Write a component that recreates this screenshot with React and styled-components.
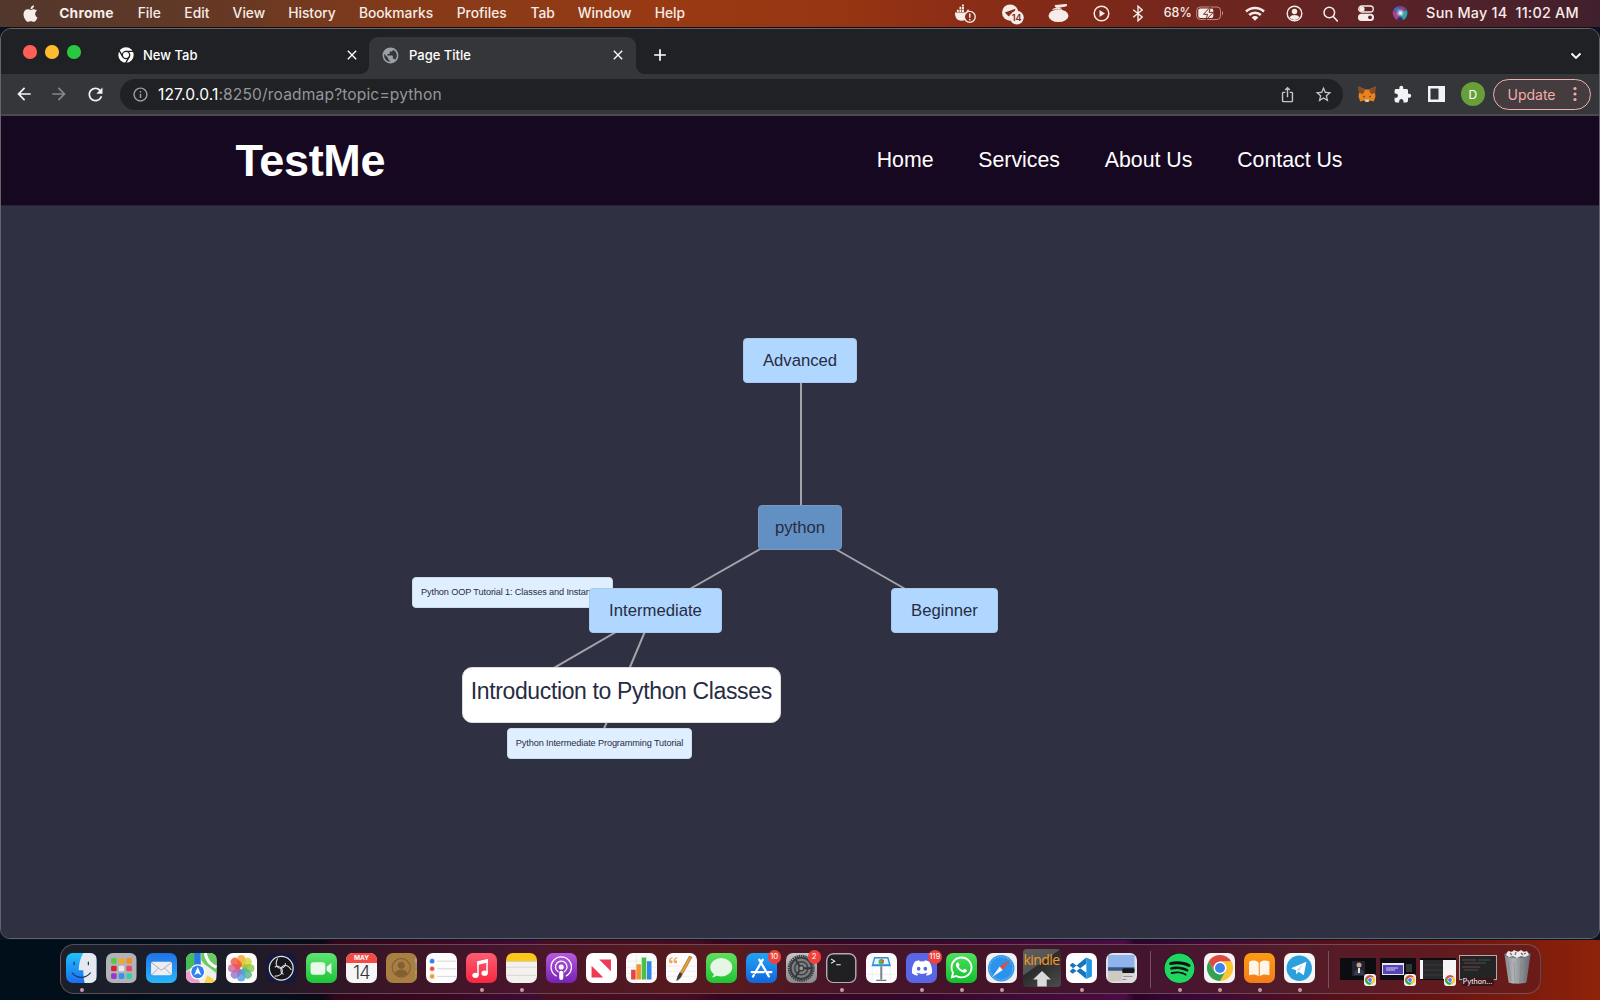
import React from "react";
import styled, { createGlobalStyle, css } from "styled-components";
import { FaApple, FaDiscord, FaWhatsapp, FaSpotify } from "react-icons/fa";
import { MdExtension, MdRefresh, MdInfoOutline, MdPublic, MdStarBorder, MdArrowBack, MdArrowForward, MdClose, MdAdd, MdOutlineIosShare } from "react-icons/md";

const ui = `Inter, "Liberation Sans", sans-serif`;
const helv = `"Liberation Sans", Arial, sans-serif`;

const Global = createGlobalStyle`
  * { box-sizing: border-box; }
  html, body { margin: 0; padding: 0; overflow: hidden; }
  body { font-family: ${ui}; }
  svg { display: block; flex: none; }
`;

const Desktop = styled.div`
  width: 1600px;
  height: 1000px;
  display: flex;
  flex-direction: column;
  overflow: hidden;
  background:
    linear-gradient(90deg, #010f1b 0, #030f1b 270px, #0a0917 322px, #33061c 336px, #3a0720 440px, #3f0a36 535px, #470d20 545px, #450b20 695px, #34061e 720px, #350629 900px, #4c0b46 1125px, #2a0428 1135px, #3c083a 1200px, #55101a 1330px, #6a1510 1450px, #8f2309 1600px) 0 940px / 1600px 60px no-repeat,
    #0a1322;
`;

const MenuBar = styled.header`
  height: 28px;
  flex: none;
  display: flex;
  align-items: flex-start;
  justify-content: space-between;
  padding: 0 21px 0 20.5px;
  color: #f6ece8;
  border-bottom: 1px solid #150e10;
  background: linear-gradient(90deg, #52372c 0, #5c3829 130px, #6b3922 260px, #843a19 400px, #983a14 660px, #963512 850px, #8c2e16 950px, #7d2819 1100px, #6b2521 1260px, #53222a 1440px, #40202d 1600px);
`;

const MenuSide = styled.div`
  height: 26px;
  display: flex;
  align-items: center;
`;

const MenuItem = styled.span`
  width: ${(p) => p.$w}px;
  margin-left: ${(p) => p.$ml ?? 23.3}px;
  padding-top: ${(p) => p.$pt ?? 0}px;
  display: flex;
  justify-content: center;
  white-space: nowrap;
  font-size: ${(p) => p.$size ?? 13.8}px;
  line-height: 20px;
  font-weight: ${(p) => (p.$bold ? 700 : 500)};
  letter-spacing: ${(p) => p.$ls ?? 0}px;
`;

const Window = styled.main`
  height: 911px;
  flex: none;
  display: flex;
  flex-direction: column;
  overflow: hidden;
  border: 1px solid #63656a;
  border-radius: 11px 11px 10px 10px;
  background: #202124;
`;

const TabStrip = styled.div`
  height: 45px;
  flex: none;
  display: flex;
  align-items: flex-end;
  background: #202124;
`;

const Lights = styled.div`
  display: flex;
  gap: 8.6px;
  padding: 0 0 15.5px 22px;
  width: 101px;
`;

const Light = styled.i`
  width: 13.6px;
  height: 13.6px;
  border-radius: 50%;
  background: ${(p) => p.$c};
`;

const Tab = styled.div`
  position: relative;
  width: ${(p) => p.$w}px;
  height: 37px;
  display: flex;
  align-items: center;
  padding: 0 ${(p) => p.$pr}px 1px ${(p) => p.$pl}px;
  color: #fff;
  font-size: 13px;
  font-weight: 500;
  border-radius: 9px 9px 0 0;
  ${(p) =>
    p.$active &&
    css`
      background: #35363a;
      &::before,
      &::after {
        content: "";
        position: absolute;
        bottom: 0;
        width: 8px;
        height: 8px;
      }
      &::before {
        left: -8px;
        background: radial-gradient(circle at 0 0, transparent 7.5px, #35363a 8px);
      }
      &::after {
        right: -8px;
        background: radial-gradient(circle at 100% 0, transparent 7.5px, #35363a 8px);
      }
    `}
`;

const TabTitle = styled.span`
  flex: 1;
  margin-left: 9px;
  white-space: nowrap;
`;

const NewTab = styled.span`
  margin: 0 auto 9px 14px;
  color: #fff;
`;

const TabMenu = styled.span`
  margin: 0 17.5px 12px 0;
`;

const Toolbar = styled.div`
  height: 40px;
  flex: none;
  display: flex;
  align-items: center;
  padding: 0 8px 0 13px;
  background: #35363a;
  color: #f1f3f4;
`;

const ToolButton = styled.span`
  width: ${(p) => p.$w}px;
  flex: none;
  display: flex;
  color: ${(p) => p.$c ?? "#f1f3f4"};
`;

const UrlBar = styled.div`
  width: 1223px;
  height: 31px;
  flex: none;
  display: flex;
  align-items: center;
  padding: 0 10px 0 12px;
  border-radius: 16px;
  background: #202124;
  color: #c3c5c8;
`;

const Url = styled.span`
  flex: 1;
  margin-left: 9px;
  color: #94969a;
  font-size: 15.6px;
  letter-spacing: 0.13px;
  white-space: nowrap;
`;

const Host = styled.span`
  color: #fff;
`;

const Extensions = styled.div`
  display: flex;
  align-items: center;
  margin-left: 15px;
`;

const Avatar = styled.span`
  width: 24.5px;
  height: 24.5px;
  flex: none;
  display: grid;
  place-items: center;
  border-radius: 50%;
  background: #689f38;
  color: #fff;
  font-size: 12px;
`;

const Update = styled.span`
  width: 98px;
  height: 31px;
  margin-left: 7.5px;
  display: flex;
  align-items: center;
  justify-content: space-between;
  padding: 0 13px 0 14px;
  border: 1.5px solid #f0b0ac;
  border-radius: 16px;
  background: #453c40;
  color: #f3aca7;
  font-size: 14px;
`;

const Page = styled.section`
  flex: 1;
  display: flex;
  flex-direction: column;
  border-top: 2px solid #4b4a50;
  background: #2f3142;
  font-family: ${helv};
`;

const SiteHeader = styled.header`
  height: 90px;
  flex: none;
  display: flex;
  align-items: center;
  justify-content: space-between;
  padding: 0 256.5px 0 234.5px;
  border-bottom: 1px solid #29203a;
  background: #170822;
  color: #fff;
`;

const Brand = styled.h1`
  margin: 0;
  font-size: 45px;
  line-height: 52px;
  font-weight: 700;
  letter-spacing: -0.35px;
`;

const Nav = styled.nav`
  display: flex;
  gap: 44.8px;
  font-size: 21.3px;
`;

const NavLink = styled.a`
  color: #fff;
  white-space: nowrap;
`;

const Canvas = styled.div`
  position: relative;
  flex: 1;
`;

const Edges = styled.svg`
  position: absolute;
  left: 0;
  top: 0;
`;

const kinds = {
  root: css`background: #6290c3; border: 1px solid #7898c0; font-size: 16.7px;`,
  level: css`background: #b0d7ff; border: 1px solid #a9c9ee; font-size: 16.7px;`,
  leaf: css`background: #e0efff; border: 1px solid #cddced; font-size: 9.2px; letter-spacing: -0.13px; padding-bottom: 1px;`,
  focus: css`background: #fff; border: 1px solid #ddd; border-radius: 10px; font-size: 23px; letter-spacing: -0.36px; padding-bottom: 7px;`,
};

const Node = styled.div`
  position: absolute;
  left: ${(p) => p.$x}px;
  top: ${(p) => p.$y}px;
  width: ${(p) => p.$w}px;
  height: ${(p) => p.$h}px;
  display: flex;
  align-items: center;
  justify-content: ${(p) => (p.$clip ? "flex-start" : "center")};
  padding-left: ${(p) => (p.$clip ? 8.5 : 0)}px;
  overflow: hidden;
  white-space: nowrap;
  border-radius: 4px;
  color: #272c42;
  ${(p) => kinds[p.$kind]}
`;

const DockArea = styled.footer`
  height: 61px;
  flex: none;
  display: flex;
  padding: 5px 59px 0 59.5px;
`;

const Dock = styled.div`
  width: 1481px;
  height: 50px;
  display: flex;
  padding: 0 1px;
  border: 1px solid rgba(150, 120, 135, 0.5);
  border-radius: 14px;
  background: linear-gradient(90deg, #19202a 0, #1c1c28 170px, #2c1727 250px, #3c1526 340px, #47152c 450px, #54191f 600px, #561a20 680px, #47152a 790px, #431429 900px, #42142e 1060px, #4a162f 1130px, #521c28 1230px, #5c1a22 1340px, #6c1c17 1480px);
`;

const Slot = styled.div`
  position: relative;
  width: 40px;
  flex: none;
  display: flex;
  flex-direction: column;
  align-items: center;
  padding-top: ${(p) => p.$pt ?? 7.5}px;
  &::after {
    content: "";
    position: absolute;
    top: 43px;
    width: 4px;
    height: 4px;
    border-radius: 50%;
    background: ${(p) => (p.$run ? "#c79aab" : "transparent")};
  }
`;

const Tile = styled.div`
  width: 30.5px;
  height: 30.5px;
  display: grid;
  place-items: center;
  overflow: hidden;
  border-radius: ${(p) => p.$r ?? 7}px;
  background: ${(p) => p.$bg ?? "transparent"};
  color: #fff;
`;

const Badge = styled.span`
  position: absolute;
  top: 5px;
  right: ${(p) => (p.$wide ? 0 : 0.5)}px;
  min-width: 13.5px;
  height: 13.5px;
  padding: 0 1px;
  border-radius: 7px;
  background: #f0423c;
  color: #fff;
  font-size: 7.8px;
  line-height: 13.5px;
  text-align: center;
`;

const Separator = styled.i`
  width: 1px;
  height: 37px;
  margin: 6px 8.5px 0;
  flex: none;
  background: #7c4f60;
`;

const CalTile = styled(Tile)`
  grid-template-rows: 10px 20.5px;
  background: #f7f6f7;
`;

const CalMonth = styled.span`
  width: 100%;
  height: 10px;
  background: #f04b45;
  font-size: 6.5px;
  line-height: 10px;
  font-weight: 700;
  text-align: center;
`;

const CalDay = styled.span`
  color: #333;
  font-size: 18px;
  line-height: 20px;
  font-weight: 300;
  letter-spacing: -0.6px;
`;

const Kindle = styled.div`
  width: 38px;
  height: 38px;
  display: flex;
  flex-direction: column;
  align-items: center;
  overflow: hidden;
  border-radius: 4px;
  background: linear-gradient(145deg, #5f5d5d 0, #555 40%, #2b2b2b 42%, #4c4c4c 100%);
  color: #f29a2c;
  font: 14px/22px "Open Sans", sans-serif;
  letter-spacing: -0.6px;
`;

const Thumb = styled.div`
  position: relative;
  width: ${(p) => p.$w ?? 36}px;
  height: ${(p) => p.$h ?? 22}px;
  border: ${(p) => (p.$frame ? "1px solid #b5a8a6" : "0")};
  background: #0d0c10;
`;

const ThumbBadge = styled.span`
  position: absolute;
  right: 0;
  bottom: -6px;
  width: 12px;
  height: 12px;
  display: grid;
  place-items: center;
  border-radius: 3px;
  background: #f4f0ef;
`;

const ThumbLabel = styled.span`
  position: absolute;
  left: 2px;
  bottom: -7px;
  width: 32px;
  border-radius: 3px;
  background: #3a1418;
  color: #fff;
  font-size: 7.1px;
  line-height: 8px;
  text-align: center;
`;

function ChromeLogo({ size }) {
  const wedge = "M-11.26-6.5A13 13 0 0 1 11.26-6.5L0-6.5L-5.63 3.25Z";
  return (
    <svg width={size} height={size} viewBox="-13 -13 26 26">
      <path d={wedge} fill="#de4a3c" />
      <path d={wedge} fill="#fbc52d" transform="rotate(120)" />
      <path d={wedge} fill="#31a350" transform="rotate(240)" />
      <circle r="6.5" fill="#fff" />
      <circle r="5" fill="#3f83f0" />
    </svg>
  );
}

function ChromeMono() {
  return (
    <svg width="16" height="16" viewBox="-13 -13 26 26">
      <circle r="12.5" fill="#fff" />
      <g stroke="#202124" strokeWidth="2.2" fill="none">
        <circle r="6" />
        <path d="M0-6H13M5.2 3L-1.3 14.3M-5.2 3L-11.7-8.3" />
      </g>
      <circle r="3.6" fill="#fff" />
    </svg>
  );
}

const Art = ({ children, size = 30.5, box = "0 0 30 30" }) => (
  <svg width={size} height={size} viewBox={box}>{children}</svg>
);

function Finder() {
  return (
    <Art>
      <defs>
        <linearGradient id="fb" x2="0" y2="1"><stop stopColor="#22c0fb" /><stop offset="1" stopColor="#1b6cf0" /></linearGradient>
      </defs>
      <path d="M0 0h30v30H0z" fill="url(#fb)" />
      <path d="M17 0C14 5 12.500 11 12.500 17H17C17 22 17.500 26 18.500 30H30V0Z" fill="#e6e9f0" />
      <path d="M8 9v2.500M22 9v2.500" stroke="#17375e" strokeWidth="1.200" strokeLinecap="round" />
      <path d="M6 19.500C11 25.500 19 25.500 24 19.500" stroke="#17375e" strokeWidth="1.100" fill="none" strokeLinecap="round" />
    </Art>
  );
}

function Launchpad() {
  const c = ["#57cb43", "#f5a623", "#f28f1e", "#d3252e", "#e8e8e8", "#ee4466", "#9b35d6", "#2f94f1", "#35cfa0"];
  return (
    <Art>
      <path d="M0 0h30v30H0z" fill="#b2b3b8" />
      {c.map((f, i) => <rect key={i} x={5 + (i % 3) * 7.5} y={5 + Math.floor(i / 3) * 7.5} width="5.500" height="5.500" rx="1.300" fill={f} />)}
    </Art>
  );
}

function Maps() {
  return (
    <Art>
      <path d="M0 0h30v30H0z" fill="#eef0ea" />
      <path d="M0 0h8v13L0 18z" fill="#47bd55" />
      <path d="M15 0h15v20C24 14 18 13 15 7z" fill="#6bcb63" />
      <path d="M19 0C20 8 25 12 30 14" stroke="#fff" strokeWidth="3" fill="none" />
      <path d="M0 19l8-4 6 15H0z" fill="#ef9ecb" />
      <path d="M18 30l3-8 9 6v2z" fill="#f9d34c" />
      <path d="M8 0h6.500v18H8z" fill="#2a78e4" />
      <circle cx="11.500" cy="18.500" r="7.500" fill="#fff" />
      <circle cx="11.500" cy="18.500" r="6.300" fill="#2f80f0" />
      <path d="M11.500 13.500l3.500 8.500-3.500-2-3.500 2z" fill="#fff" />
    </Art>
  );
}

function Photos() {
  const c = ["#f6a02c", "#d9cf2e", "#8cc63f", "#4fb58a", "#4f9ee0", "#8f74c8", "#d0619c", "#f0503f"];
  return (
    <Art box="-15 -15 30 30">
      {c.map((f, i) => <rect key={i} x="-4" y="-13" width="8" height="12" rx="4" fill={f} opacity=".8" transform={`rotate(${i * 45})`} />)}
    </Art>
  );
}

function Obs() {
  return (
    <Art box="-15 -15 30 30">
      <circle r="11.700" fill="#17161b" stroke="#e5e5e8" strokeWidth="1.200" />
      {[0, 120, 240].map((a) => (
        <path key={a} transform={`rotate(${a})`} d="M-3.500-9.500C-7-3-3.500 .5 0 0C3-.500 4.500-3 4-5" fill="none" stroke="#dedee2" strokeWidth="1.100" />
      ))}
    </Art>
  );
}

function Reminders() {
  return (
    <Art>
      {["#2b7de9", "#ea4d3d", "#f09a37"].map((f, i) => (
        <g key={f}>
          <circle cx="6" cy={8 + i * 7.5} r="2" fill={f} stroke={f} strokeOpacity=".35" strokeWidth="1.500" />
          <path d={`M11 ${8 + i * 7.5}H30`} stroke="#cfcfd2" strokeWidth=".8" />
        </g>
      ))}
    </Art>
  );
}

function Music() {
  return (
    <Art>
      <path d="M11.800 22V9.200L20.700 7v12.800" stroke="#fff" strokeWidth="1.500" fill="none" />
      <path d="M11.100 8.200l10.300-2.400v3.600l-10.300 2.400z" fill="#fff" />
      <ellipse cx="9.300" cy="22" rx="3.100" ry="2.500" fill="#fff" /><ellipse cx="18.300" cy="19.800" rx="3.100" ry="2.500" fill="#fff" />
    </Art>
  );
}

function Gear() {
  return (
    <Art box="-15 -15 30 30">
      <circle r="12.300" fill="none" stroke="#3b3c40" strokeWidth="2" strokeDasharray="1.500 .7" />
      <circle r="10.500" fill="#7b7d82" stroke="#3b3c40" strokeWidth="2" />
      <circle r="6.500" fill="none" stroke="#3d3f43" strokeWidth="1.500" />
      <circle r="2.500" fill="#999" stroke="#333" strokeWidth="1.200" />
      <path d="M2.200 0H10M-1.500-2L-5.500-8.500M-1.500 2L-5.500 8.500" stroke="#333" strokeWidth="1.800" />
    </Art>
  );
}

function Safari() {
  return (
    <Art box="-15 -15 30 30">
      <circle r="13" fill="#2b93ea" />
      <circle r="11.500" fill="none" stroke="#a9d6fa" strokeWidth="1.500" strokeDasharray=".4 1.100" />
      <path d="M9-8.500L1.500 1.700-1.500-1.700z" fill="#e8483f" />
      <path d="M-9 8.500L1.500 1.700-1.500-1.700z" fill="#f2f4f6" />
    </Art>
  );
}

function Trash() {
  return (
    <svg width="29" height="36" viewBox="0 0 29 36">
      <defs><linearGradient id="tr"><stop stopColor="#85888c" /><stop offset=".35" stopColor="#b0b3b6" /><stop offset=".7" stopColor="#85888c" /><stop offset="1" stopColor="#65686c" /></linearGradient></defs>
      <path d="M1.500 5.500h26L23.500 33c-.4 2.200-17.600 2.200-18 0z" fill="url(#tr)" />
      <ellipse cx="14.500" cy="5.500" rx="13" ry="3.500" fill="#6d6f73" />
      <path d="M3 6l2-4 4 1 2-2 4 2 3-2 3 2 3-1 2 4-4 2-4-1-4 2-4-2-4 1z" fill="#ecedf0" />
      <path d="M7 4l2 2M13 3l-1 3M18 4l2 2M23 4l-2 1" stroke="#8a5d5d" strokeWidth="1.200" />
      <path d="M5 12l3 20M11 13l1 20M18 13l-1 20M24 12l-3 20" stroke="#75787c" strokeWidth=".6" opacity=".6" />
    </svg>
  );
}

const apps = [
  { id: "finder", art: <Finder />, run: true },
  { id: "launchpad", art: <Launchpad /> },
  { id: "mail", bg: "linear-gradient(#2370e8,#28b7f8)", art: <Art><rect x="5" y="8.500" width="20.500" height="13.500" rx="1.800" fill="#eceef2" /><path d="M5.500 9.500l9.700 7.500 9.700-7.500M5.500 21.500l6.800-6.800M25 21.500l-6.800-6.800" fill="none" stroke="#a1a8b4" strokeWidth=".9" /></Art> },
  { id: "maps", art: <Maps /> },
  { id: "photos", bg: "#fdfdfd", art: <Photos /> },
  { id: "obs", bg: "#151a3c", art: <Obs /> },
  { id: "facetime", bg: "linear-gradient(#5fe372,#1cc537)", art: <Art><rect x="4.500" y="9" width="14.500" height="12.500" rx="3" fill="#eaf8ec" /><path d="M20.300 13.500l4.700-3.700v11l-4.700-3.700z" fill="#eaf8ec" /></Art> },
  { id: "calendar", calendar: true },
  { id: "contacts", bg: "#a97e44", art: <Art><circle cx="15" cy="14.500" r="9" fill="none" stroke="#7f5b2c" /><circle cx="15" cy="12" r="3.500" fill="#82602f" /><path d="M8.500 20c2-5 11-5 13 0-3 4-10 4-13 0z" fill="#82602f" /><path d="M29.500 5v5" stroke="#bbb" /><path d="M29.500 11v4" stroke="#49b4d8" /><path d="M29.500 17v4" stroke="#f09a37" /><path d="M29.500 22v4" stroke="#5cc560" /></Art> },
  { id: "reminders", bg: "#fdfdfd", art: <Reminders /> },
  { id: "music", bg: "linear-gradient(#fb5e74,#f9263f)", art: <Music />, run: true },
  { id: "notes", bg: "linear-gradient(#fbc719 0 25%,#c9b26a 27%,#f3f1ee 30%)", art: <Art><path d="M0 14h30M0 22h30" stroke="#d5d2cd" strokeWidth=".8" /></Art>, run: true },
  { id: "podcasts", bg: "linear-gradient(#b65bdf,#7722b5)", art: <Art box="-15 -15 30 30"><path d="M-5 7.500A10 10 0 1 1 5 7.500M-3 3.500A5.700 5.700 0 1 1 3 3.500" fill="none" stroke="#fff" strokeWidth="1.300" strokeLinecap="round" /><circle cy="-1.300" r="2.500" fill="#fff" /><rect x="-2" y="2.500" width="4" height="9" rx="2" fill="#fff" /></Art> },
  { id: "news", bg: "#fff", art: <Art><path d="M13 6.500h11.500V18z" fill="#ec3b55" /><path d="M5.500 12.500L17 24H5.500z" fill="#ec3b55" /><path d="M5.500 6.500h2L24.500 23v1h-2.500L5.500 8z" fill="#fff" /></Art> },
  { id: "numbers", bg: "#fbfbfb", art: <Art><path d="M0 8h30M0 14h30M0 20h30M10 0v30M20 0v30" stroke="#dcebdc" strokeWidth=".6" /><path d="M5 16.500h4.500V26H5z" fill="#e6434a" /><path d="M10.200 11h4.500v15h-4.500z" fill="#f2932e" /><path d="M15.400 4.500h4.500V26h-4.500z" fill="#4ac146" /><path d="M20.600 8h4.500v18h-4.500z" fill="#2f86ee" /></Art> },
  { id: "pages", bg: "#fdfcfa", art: <Art><path d="M1 13h28M1 18h28M1 23h28" stroke="#e6e4e0" strokeWidth=".6" /><path d="M23 3l2.500 1.200L14.500 24l-3 3 .6-4.500z" fill="#f19a2e" stroke="#6b5138" strokeWidth=".5" /><path d="M13.500 19l2.500 1.500-2 4-4 3 1.500-5z" fill="#3b3c40" /><path d="M6.500 4.800C4 5 3 7 3.800 9M11 4.800C8.500 5 7.500 7 8.300 9" stroke="#eda15a" strokeWidth="1.200" fill="none" /><circle cx="5" cy="8.600" r="1.500" fill="#eda15a" /><circle cx="9.500" cy="8.600" r="1.500" fill="#eda15a" /></Art> },
  { id: "messages", bg: "linear-gradient(#62dd5f,#1fc434)", art: <Art><ellipse cx="15" cy="14" rx="10.800" ry="9" fill="#e6f6e4" /><path d="M8 19c0 3-1 4-2.500 5 3 0 5-1.300 6-3z" fill="#e6f6e4" /></Art> },
  { id: "appstore", bg: "linear-gradient(#22a3f4,#1266dc)", badge: "10", art: <Art><g stroke="#fff" strokeWidth="2.200" strokeLinecap="round"><path d="M16.500 6.500L9 19.500M13 6.500l9.500 16.500M5.500 18.800h12M22 18.800h3M7.700 21.800l-.8 1.300" /></g></Art> },
  { id: "settings", bg: "linear-gradient(#c5c6ca,#88898e)", badge: "2", art: <Gear /> },
  { id: "terminal", run: true, art: <Art><rect x=".7" y=".7" width="28.600" height="28.600" rx="6.500" fill="#202022" stroke="#b3acb1" strokeWidth="1.400" /><path d="M5 6l3.500 2L5 10M10 11.500h4.500" stroke="#eee" fill="none" strokeWidth="1.100" /></Art> },
  { id: "keynote", bg: "#fdfdfd", art: <Art><path d="M0 21h30M6 0v30M24 0v30" stroke="#e2e8ef" strokeWidth=".6" /><path d="M8 4h14l2.500 9h-19z" fill="#2a90dc" /><path d="M9 5.500h12l1.500 5.500h-15z" fill="#e9f2fa" /><circle cx="15" cy="8.500" r="2.700" fill="#48b85a" /><path d="M15 8.500V5.800a2.700 2.700 0 0 1 2.300 4z" fill="#ed5542" /><path d="M14 13h2v13h-2z" fill="#7a8590" /><path d="M10 27h10" stroke="#6e7781" strokeWidth="1.200" /></Art> },
  { id: "discord", bg: "#5966e6", badge: "119", run: true, art: <FaDiscord size={22} /> },
  { id: "whatsapp", bg: "linear-gradient(#4fe05e,#0fbf2c)", run: true, art: <FaWhatsapp size={25} /> },
  { id: "safari", bg: "#f0f1f3", run: true, art: <Safari /> },
  { id: "kindle", kindle: true },
  { id: "vscode", bg: "#fff", run: true, art: <Art><path d="M20 4.500v6L6.500 20.500 4 18.500v-1z M20 25.500v-6L6.500 9.500 4 11.500v1z" fill="#1476be" /><path d="M20 4.500v21l5.500-2.300V6.800z" fill="#2596e4" /></Art> },
  { id: "preview", bg: "#dfe3ec", art: <Art><path d="M2 2h26v16H2z" fill="#8fb3ea" /><path d="M2 14h26v4H2z" fill="#39598c" /><path d="M2 17.500h26V28H2z" fill="#cfcac0" /><rect x="16" y="15" width="12" height="5" rx="1.500" fill="#17171a" /><path d="M17 20h10l2 10H14z" fill="#dadbdc" /><path d="M17 23h9M16 26h4" stroke="#777" strokeWidth=".8" /></Art> },
  { sep: true, id: "s1" },
  { id: "spotify", r: 16, bg: "#111", run: true, art: <FaSpotify size={31} color="#1fd662" /> },
  { id: "chrome", bg: "#f5f3f3", run: true, art: <ChromeLogo size={26} /> },
  { id: "books", bg: "linear-gradient(#fb9d12,#f47c1b)", run: true, art: <Art><path d="M14.500 9.500C12 7 8 7 5 8.500V22c3-1.300 7-1.300 9.500.8zM15.500 9.500C18 7 22 7 25 8.500V22c-3-1.300-7-1.300-9.500.8z" fill="#fff5e8" /></Art> },
  { id: "telegram", bg: "#f5f6f8", run: true, art: <Art box="-15 -15 30 30"><circle r="12.500" fill="#2ca0dc" /><path d="M-8 0L7-6.500 4.500 7-.5 3.500-3 6-3.200 2z" fill="#fff" /><path d="M-3 2L4-4-.5 3.500" fill="#bfdff2" /></Art> },
  { sep: true, id: "s2" },
];

function DockApp({ app }) {
  if (app.sep) return <Separator />;
  if (app.kindle)
    return (
      <Slot $pt={4}>
        <Kindle>
          kindle
          <svg width="20" height="16" viewBox="0 0 20 17"><path d="M10 0l9.500 9H15v7.500H5V9H.5z" fill="#d9dadb" /></svg>
        </Kindle>
      </Slot>
    );
  return (
    <Slot $run={app.run}>
      {app.calendar ? (
        <CalTile><CalMonth>MAY</CalMonth><CalDay>14</CalDay></CalTile>
      ) : (
        <Tile $bg={app.bg} $r={app.r}>{app.art}</Tile>
      )}
      {app.badge && <Badge $wide={app.badge.length > 2}>{app.badge}</Badge>}
    </Slot>
  );
}

const menus = [["File", 23], ["Edit", 25.5], ["View", 32], ["History", 47.5], ["Bookmarks", 74], ["Profiles", 51], ["Tab", 24], ["Window", 53.5], ["Help", 30.5]];

const nodes = [
  { label: "Advanced", kind: "level", x: 742, y: 132, w: 114, h: 45 },
  { label: "python", kind: "root", x: 757, y: 299, w: 84, h: 45 },
  { label: "Python OOP Tutorial 1: Classes and Instances", kind: "leaf", clip: true, x: 410.5, y: 371, w: 201.5, h: 31 },
  { label: "Intermediate", kind: "level", x: 588, y: 382, w: 133, h: 45 },
  { label: "Beginner", kind: "level", x: 890, y: 382, w: 107, h: 45 },
  { label: "Python Intermediate Programming Tutorial", kind: "leaf", x: 506, y: 522, w: 185, h: 31 },
  { label: "Introduction to Python Classes", kind: "focus", x: 461, y: 461, w: 318.5, h: 56 },
];

function StatusIcons() {
  return (
    <>
      <MenuItem $w={22} $ml={0} $pt={2}>
        <svg width="22" height="20" viewBox="0 0 23 20">
          <path d="M1 8.500h12c0-2 1-3 2-3.500l1 3h3c-1 5-5 9-11 9-4 0-7-2-7-8.500z" fill="currentColor" />
          <path d="M3 5.500h2V8H3zM5.700 5.500h2V8h-2zM8.400 5.500h2V8h-2zM5.700 2.500h2V5h-2zM8.400 2.500h2V5h-2zM8.400 0h2v2h-2z" fill="currentColor" />
          <circle cx="16.500" cy="13" r="5.700" fill="#8a2e17" stroke="currentColor" strokeWidth="1.400" />
          <path d="M16.500 9.500v4.300M16.500 15.200v1.500" stroke="currentColor" strokeWidth="1.500" />
        </svg>
      </MenuItem>
      <MenuItem $w={22} $ml={26} $pt={3}>
        <svg width="22" height="21" viewBox="0 0 23 21">
          <circle cx="8.500" cy="8.500" r="8.500" fill="currentColor" />
          <path d="M3 8.500l11-4-2 8-3-2-2 2z" fill="#8a2c18" />
          <circle cx="15.500" cy="13.700" r="7.200" fill="currentColor" />
          <text x="15.300" y="17.200" textAnchor="middle" fontFamily="Inter" fontSize="9.500" fontWeight="600" fill="#7c2a18">14</text>
        </svg>
      </MenuItem>
      <MenuItem $w={21} $ml={24}>
        <svg width="21" height="18" viewBox="0 0 21 18">
          <ellipse cx="10.500" cy="11.700" rx="10" ry="6.300" fill="currentColor" />
          <path d="M4.500 5.500c1.500-1.500 8-1.500 9.500 0M8.500 4L7 1.500 18.500.5v1.300L10 3.500" stroke="currentColor" strokeWidth="1" fill="currentColor" />
        </svg>
      </MenuItem>
      <MenuItem $w={16} $ml={25}>
        <svg width="17" height="17" viewBox="0 0 17 17"><circle cx="8.500" cy="8.500" r="7.300" fill="none" stroke="currentColor" strokeWidth="1.500" /><path d="M6.500 5l5.500 3.500L6.500 12z" fill="currentColor" /></svg>
      </MenuItem>
      <MenuItem $w={12} $ml={22.5}>
        <svg width="12" height="17" viewBox="0 0 12 17"><path d="M1.200 4.800l9 7.200L6 15.800V1.200L10.200 5l-9 7.200" fill="none" stroke="currentColor" strokeWidth="1.400" /></svg>
      </MenuItem>
      <MenuItem $w={26.5} $ml={20.5} $size={12.4}>68%</MenuItem>
      <MenuItem $w={28} $ml={5}>
        <svg width="28" height="15" viewBox="0 0 28 15">
          <rect x=".7" y="1" width="23.800" height="12.500" rx="3.500" fill="none" stroke="#b98d87" />
          <path d="M26 5v4.500c1.500-.7 1.500-3.800 0-4.500z" fill="#b98d87" />
          <rect x="2.300" y="2.600" width="15" height="9.300" rx="2" fill="currentColor" />
          <path d="M14.500.8L7.500 8.300h4L10 14l7.300-7.700h-4.200z" fill="currentColor" stroke="#70261f" strokeWidth="1" />
        </svg>
      </MenuItem>
      <MenuItem $w={19} $ml={21.5}>
        <svg width="20" height="15" viewBox="0 0 20 15">
          <g fill="none" stroke="currentColor" strokeWidth="2.500"><path d="M1 5.500a13 13 0 0 1 18 0" /><path d="M4.200 9a8.300 8.300 0 0 1 11.600 0" /></g>
          <path d="M10 14.700l-3.300-3.300a4.600 4.600 0 0 1 6.600 0z" fill="currentColor" />
        </svg>
      </MenuItem>
      <MenuItem $w={16} $ml={21.5}>
        <svg width="17" height="17" viewBox="0 0 17 17"><circle cx="8.500" cy="8.500" r="7.300" fill="none" stroke="currentColor" strokeWidth="1.400" /><circle cx="8.500" cy="6.500" r="2.700" fill="currentColor" /><path d="M3.500 12.500c1.500-3.300 8.500-3.300 10 0a6.300 6.300 0 0 1-10 0z" fill="currentColor" /></svg>
      </MenuItem>
      <MenuItem $w={15} $ml={21} $pt={1}>
        <svg width="15" height="16" viewBox="0 0 15 16"><circle cx="6.300" cy="6.500" r="5.300" fill="none" stroke="currentColor" strokeWidth="1.500" /><path d="M10.200 10.500l4.200 4.500" stroke="currentColor" strokeWidth="1.700" strokeLinecap="round" /></svg>
      </MenuItem>
      <MenuItem $w={16} $ml={19.5}>
        <svg width="16" height="16" viewBox="0 0 16 16"><rect x=".7" y="1" width="14.600" height="6" rx="3" fill="none" stroke="currentColor" strokeWidth="1.300" /><circle cx="4" cy="4" r="2.600" fill="currentColor" /><rect x="0" y="8.700" width="16" height="7.200" rx="3.500" fill="currentColor" /><circle cx="12" cy="12.300" r="1.900" fill="#57222a" /></svg>
      </MenuItem>
      <MenuItem $w={16} $ml={18.5}>
        <svg width="16" height="16" viewBox="0 0 16 16">
          <defs><radialGradient id="siri"><stop stopColor="#fff" /><stop offset=".3" stopColor="#b7d4ea" /><stop offset="1" stopColor="#4668a8" stopOpacity="0" /></radialGradient></defs>
          <circle cx="8" cy="8" r="7.800" fill="#3a2f5c" />
          <path d="M1 6C3 0 12-1 15 5L8 8z" fill="#8b3c76" /><path d="M1 6c-1 4 1 7 4 9l3-7z" fill="#b13f83" /><path d="M8 8l7-3c1 4 0 8-4 10z" fill="#2fa7a5" /><path d="M2 5c2-4 6-4 6 3z" fill="#3572d0" />
          <circle cx="8.500" cy="8" r="5.500" fill="url(#siri)" />
        </svg>
      </MenuItem>
      <MenuItem $w={153} $ml={18} $size={14.4} $ls={0.22}>Sun May 14&nbsp; 11:02 AM</MenuItem>
    </>
  );
}

function Fox() {
  return (
    <svg width="18" height="17" viewBox="0 0 18 17">
      <path d="M.5.5L7 3.500h4L17.500.5 17 7l.5 3.500-1.700 5-3.800-1-1.500 1.500h-3L6 14.500l-3.800 1-1.700-5L1 7z" fill="#e8821e" />
      <path d="M.5.5L7 4 5 8 1 7zM17.500.5L11 4l2 4 4-1z" fill="#8a4a22" />
      <path d="M6 9.500l1 2-2-.7zM12 9.500l-1 2 2-.7z" fill="#33281f" />
      <path d="M7 13.500h4l-.7 2.500H7.700z" fill="#d9cdc4" />
    </svg>
  );
}

export default function App() {
  return (
    <Desktop>
      <Global />
      <MenuBar>
        <MenuSide>
          <FaApple size={19} />
          <MenuItem $w={56} $ml={19} $bold $ls={0.2}>Chrome</MenuItem>
          {menus.map(([label, w]) => <MenuItem key={label} $w={w}>{label}</MenuItem>)}
        </MenuSide>
        <MenuSide><StatusIcons /></MenuSide>
      </MenuBar>

      <Window>
        <TabStrip>
          <Lights><Light $c="#ff5f57" /><Light $c="#febc2e" /><Light $c="#28c840" /></Lights>
          <Tab $w={267} $pl={16} $pr={9}>
            <ChromeMono />
            <TabTitle>New Tab</TabTitle>
            <MdClose size={16} />
          </Tab>
          <Tab $active $w={267} $pl={12} $pr={10}>
            <MdPublic size={19} color="#9aa0a6" />
            <TabTitle>Page Title</TabTitle>
            <MdClose size={16} />
          </Tab>
          <NewTab><MdAdd size={20} /></NewTab>
          <TabMenu><svg width="12" height="12" viewBox="0 0 12 12"><path d="M1.500 3.500l4.500 4.500 4.500-4.500" stroke="#fff" strokeWidth="1.800" fill="none" /></svg></TabMenu>
        </TabStrip>
        <Toolbar>
          <ToolButton $w={35}><MdArrowBack size={20} /></ToolButton>
          <ToolButton $w={36} $c="#85878b"><MdArrowForward size={20} /></ToolButton>
          <ToolButton $w={35}><MdRefresh size={21} /></ToolButton>
          <UrlBar>
            <MdInfoOutline size={17} color="#9aa0a6" />
            <Url><Host>127.0.0.1</Host>:8250/roadmap?topic=python</Url>
            <ToolButton $w={35} $c="#c3c5c8"><MdOutlineIosShare size={17} /></ToolButton>
            <MdStarBorder size={19} />
          </UrlBar>
          <Extensions>
            <ToolButton $w={34.5}><Fox /></ToolButton>
            <ToolButton $w={35.5}><MdExtension size={19} /></ToolButton>
            <ToolButton $w={32.5}>
              <svg width="17" height="16" viewBox="0 0 17 16"><path d="M0 0h17v16H0zM2.500 2.500v11H10.500v-11z" fill="currentColor" fillRule="evenodd" /></svg>
            </ToolButton>
            <Avatar>D</Avatar>
            <Update>
              Update
              <svg width="4" height="16" viewBox="0 0 4 16"><circle cx="2" cy="2.500" r="1.600" fill="currentColor" /><circle cx="2" cy="8" r="1.600" fill="currentColor" /><circle cx="2" cy="13.500" r="1.600" fill="currentColor" /></svg>
            </Update>
          </Extensions>
        </Toolbar>
        <Page>
          <SiteHeader>
            <Brand>TestMe</Brand>
            <Nav>
              {["Home", "Services", "About Us", "Contact Us"].map((t) => <NavLink key={t}>{t}</NavLink>)}
            </Nav>
          </SiteHeader>
          <Canvas>
            <Edges width="1598" height="730">
              <g stroke="#a3a3ab" strokeWidth="2">
                <path d="M800 154V321" />
                <path d="M798 321L652 404M796 321L941 404" />
                <path d="M653 404L501 492M653 404L597 537" />
              </g>
            </Edges>
            {nodes.map((n) => (
              <Node key={n.label} $kind={n.kind} $clip={n.clip} $x={n.x} $y={n.y} $w={n.w} $h={n.h}>{n.label}</Node>
            ))}
          </Canvas>
        </Page>
      </Window>

      <DockArea>
        <Dock>
          {apps.map((a) => <DockApp key={a.id} app={a} />)}
          <Slot $pt={13}>
            <Thumb>
              <svg width="36" height="22" viewBox="0 0 36 22"><path d="M12 3h13v15H12z" fill="#20222e" /><circle cx="19" cy="7" r="2.500" fill="#c9a08e" /><path d="M14 17c0-8 10-8 10 0z" fill="#3c3c50" /><path d="M18 10h2v5h-2z" fill="#e0dfe5" /></svg>
              <ThumbBadge><ChromeLogo size={10} /></ThumbBadge>
            </Thumb>
          </Slot>
          <Slot $pt={13}>
            <Thumb>
              <svg width="36" height="22" viewBox="0 0 36 22"><path d="M2 5h22v12H2z" fill="#e7e3f5" /><path d="M3 7h20v9H3z" fill="#5644b5" /><path d="M6 10h12M6 12h9" stroke="#cfc8f0" /><path d="M26 6h6v8h-6z" fill="#2c3b35" /></svg>
              <ThumbBadge><ChromeLogo size={10} /></ThumbBadge>
            </Thumb>
          </Slot>
          <Slot $pt={13}>
            <Thumb>
              <svg width="36" height="22" viewBox="0 0 36 22"><path d="M0 2h36v19H0z" fill="#f5f4f6" /><path d="M3 2h20v19H3z" fill="#29282d" /><path d="M3 7h20M3 12h20M3 17h20" stroke="#444" strokeWidth=".7" /></svg>
              <ThumbBadge><ChromeLogo size={10} /></ThumbBadge>
            </Thumb>
          </Slot>
          <Slot $pt={10}>
            <Thumb $w={38} $h={25} $frame>
              <svg width="36" height="23" viewBox="0 0 36 23"><path d="M0 0h36v23H0z" fill="#232425" /><path d="M2 4h14M2 11h18" stroke="#9c4545" strokeWidth=".8" /><path d="M4 7h22M4 14h14M18 4h12" stroke="#4c5f58" strokeWidth=".8" /></svg>
              <ThumbLabel>Python…</ThumbLabel>
            </Thumb>
          </Slot>
          <Slot $pt={4}><Trash /></Slot>
        </Dock>
      </DockArea>
    </Desktop>
  );
}
